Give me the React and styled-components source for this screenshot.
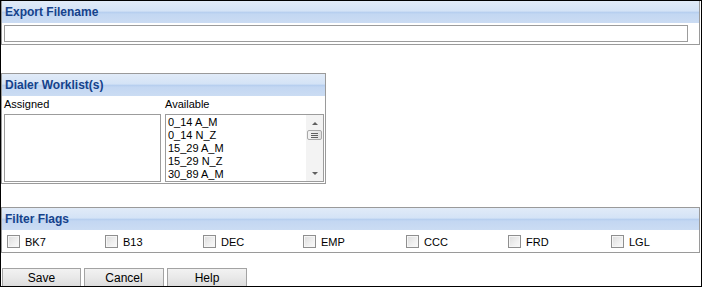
import React from 'react';
import styled, { createGlobalStyle } from 'styled-components';

const GlobalStyle = createGlobalStyle`
  html, body {
    margin: 0;
    padding: 0;
    background: #fff;
  }
  body {
    font-family: 'Liberation Sans', Arial, sans-serif;
    font-size: 11px;
    color: #000;
  }
`;

const Frame = styled.div`
  width: 702px;
  height: 287px;
  box-sizing: border-box;
  border: 1px solid #000;
  display: flex;
  flex-direction: column;
  overflow: hidden;
`;

const Panel = styled.div`
  box-sizing: border-box;
  width: ${(p) => p.$width}px;
  border: 1px solid #9a9a9a;
  border-top-width: ${(p) => (p.$noTop ? 0 : 1)}px;
  margin-top: ${(p) => p.$top || 0}px;
  display: flex;
  flex-direction: column;
`;

const PanelHeader = styled.div`
  height: 22px;
  line-height: 22px;
  padding-left: 3px;
  font-size: 12px;
  font-weight: 700;
  color: #15428b;
  background: linear-gradient(
    to bottom,
    #e1ebf8 0%,
    #d4e3f6 45%,
    #b7cfef 52%,
    #c3d7f2 60%,
    #cbdcf3 100%
  );
`;

const InputRow = styled.div`
  padding: 2px 2px;
`;

const TextInput = styled.input`
  display: block;
  box-sizing: border-box;
  width: 684px;
  height: 17px;
  margin: 0;
  border: 1px solid #9c9c9c;
  padding: 0 2px;
  font: inherit;
  outline: none;
`;

const Columns = styled.div`
  display: flex;
  gap: 4px;
  padding: 0 1px 1px 2px;
`;

const Column = styled.div`
  display: flex;
  flex-direction: column;
  width: ${(p) => p.$width}px;
`;

const ColLabel = styled.div`
  height: 18px;
  line-height: 16px;
  font-size: 11px;
`;

const ListBox = styled.div`
  box-sizing: border-box;
  height: 68px;
  border: 1px solid #9c9c9c;
  background: #fff;
  display: flex;
  overflow: hidden;
`;

const Options = styled.div`
  flex: 1;
  padding: 1px 0 0 2px;
`;

const Option = styled.div`
  height: 13px;
  line-height: 13px;
  font-size: 11px;
  white-space: nowrap;
`;

const ScrollTrack = styled.div`
  width: 17px;
  background: #f3f3f3;
  display: flex;
  flex-direction: column;
  align-items: center;
`;

const Arrow = styled.div`
  width: 0;
  height: 0;
  border-left: 3px solid transparent;
  border-right: 3px solid transparent;
  ${(p) =>
    p.$down
      ? 'border-top: 3px solid #606060; margin-top: auto; margin-bottom: 6px;'
      : 'border-bottom: 3px solid #606060; margin-top: 7px;'}
`;

const Thumb = styled.div`
  box-sizing: border-box;
  width: 15px;
  height: 10px;
  margin-top: 5px;
  border: 1px solid #a9a9a9;
  border-radius: 2px;
  background: linear-gradient(to right, #f4f4f4, #e2e2e2);
  display: flex;
  flex-direction: column;
  align-items: center;
  justify-content: center;
  gap: 1px;
`;

const Grip = styled.span`
  display: block;
  width: 7px;
  height: 1px;
  background: #606060;
`;

const FlagRow = styled.div`
  height: 22px;
  display: flex;
  align-items: center;
  padding-left: 5px;
`;

const FlagCell = styled.label`
  width: ${(p) => p.$width}px;
  display: flex;
  align-items: center;
  gap: 5px;
  font-size: 11px;
  padding-top: 1px;
`;

const CheckBox = styled.span`
  box-sizing: border-box;
  width: 13px;
  height: 13px;
  border: 1px solid #8f8f8f;
  background: linear-gradient(135deg, #dcdcdc 0%, #f0f0f0 60%, #fafafa 100%);
  box-shadow: inset 0 0 0 1px #f6f6f6;
  flex-shrink: 0;
`;

const ButtonBar = styled.div`
  margin-top: auto;
  display: flex;
  gap: 3px;
  padding-left: 1px;
`;

const Button = styled.button`
  box-sizing: border-box;
  width: ${(p) => p.$width}px;
  height: 18px;
  margin: 0;
  padding: 0;
  border: 1px solid #a3a3a3;
  border-bottom: none;
  background: linear-gradient(to bottom, #f2f2f2 0%, #e9e9e9 50%, #dcdcdc 100%);
  font-family: 'Liberation Sans', Arial, sans-serif;
  font-size: 12px;
  line-height: 16px;
  color: #000;
`;

const worklists = ['0_14 A_M', '0_14 N_Z', '15_29 A_M', '15_29 N_Z', '30_89 A_M'];

const flags = [
  { name: 'BK7', width: 98 },
  { name: 'B13', width: 98 },
  { name: 'DEC', width: 100 },
  { name: 'EMP', width: 103 },
  { name: 'CCC', width: 102 },
  { name: 'FRD', width: 103 },
  { name: 'LGL', width: 80 },
];

export default function App() {
  return (
    <>
      <GlobalStyle />
      <Frame>
        <Panel $width={699} $noTop>
          <PanelHeader>Export Filename</PanelHeader>
          <InputRow>
            <TextInput type="text" />
          </InputRow>
        </Panel>

        <Panel $width={325} $top={28}>
          <PanelHeader>Dialer Worklist(s)</PanelHeader>
          <Columns>
            <Column $width={157}>
              <ColLabel>Assigned</ColLabel>
              <ListBox />
            </Column>
            <Column $width={159}>
              <ColLabel>Available</ColLabel>
              <ListBox>
                <Options>
                  {worklists.map((w) => (
                    <Option key={w}>{w}</Option>
                  ))}
                </Options>
                <ScrollTrack>
                  <Arrow />
                  <Thumb>
                    <Grip />
                    <Grip />
                    <Grip />
                  </Thumb>
                  <Arrow $down />
                </ScrollTrack>
              </ListBox>
            </Column>
          </Columns>
        </Panel>

        <Panel $width={699} $top={23}>
          <PanelHeader>Filter Flags</PanelHeader>
          <FlagRow>
            {flags.map((f) => (
              <FlagCell key={f.name} $width={f.width}>
                <CheckBox />
                {f.name}
              </FlagCell>
            ))}
          </FlagRow>
        </Panel>

        <ButtonBar>
          <Button $width={79}>Save</Button>
          <Button $width={80}>Cancel</Button>
          <Button $width={80}>Help</Button>
        </ButtonBar>
      </Frame>
    </>
  );
}
